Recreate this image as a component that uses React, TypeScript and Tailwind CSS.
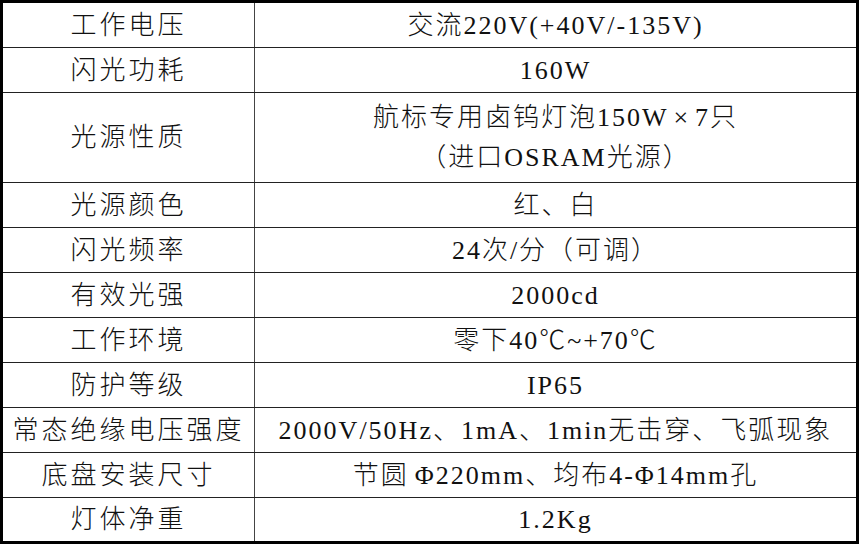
import React from "react";

interface SpecRow {
  label: string;
  value: React.ReactNode;
  tall?: boolean;
}

const rows: SpecRow[] = [
  { label: "工作电压", value: "交流220V(+40V/-135V)" },
  { label: "闪光功耗", value: "160W" },
  {
    label: "光源性质",
    value: (
      <div className="flex flex-col items-center leading-[40px]">
        <span>
          航标专用卤钨灯泡150W<span className="px-[5px]">×</span>7只
        </span>
        <span>（进口OSRAM光源）</span>
      </div>
    ),
    tall: true,
  },
  { label: "光源颜色", value: "红、白" },
  { label: "闪光频率", value: "24次/分（可调）" },
  { label: "有效光强", value: "2000cd" },
  { label: "工作环境", value: "零下40℃~+70℃" },
  { label: "防护等级", value: "IP65" },
  { label: "常态绝缘电压强度", value: "2000V/50Hz、1mA、1min无击穿、飞弧现象" },
  {
    label: "底盘安装尺寸",
    value: (
      <span>
        节圆<span className="pl-[6px]">Φ</span>220mm、均布4-Φ14mm孔
      </span>
    ),
  },
  { label: "灯体净重", value: "1.2Kg" },
];

export default function App() {
  return (
    <div className="w-[860px] h-[546px] bg-white font-['Liberation_Serif','Noto_Sans_CJK_SC',serif] font-light text-[26px] tracking-[2px] text-[#111]">
      <div className="w-[859px] h-[544px] border-[3px] border-black flex flex-col">
        {rows.map((row, i) => (
          <div
            key={row.label}
            className={
              i === rows.length - 1
                ? "flex-1 grid grid-cols-[252px_1fr]"
                : row.tall
                ? "h-[90px] grid grid-cols-[252px_1fr] border-b border-[#222]"
                : "h-[45px] grid grid-cols-[252px_1fr] border-b border-[#222]"
            }
          >
            <div className="flex items-center justify-center border-r border-[#444] tracking-[3px]">
              {row.label}
            </div>
            <div className="flex items-center justify-center">{row.value}</div>
          </div>
        ))}
      </div>
    </div>
  );
}
